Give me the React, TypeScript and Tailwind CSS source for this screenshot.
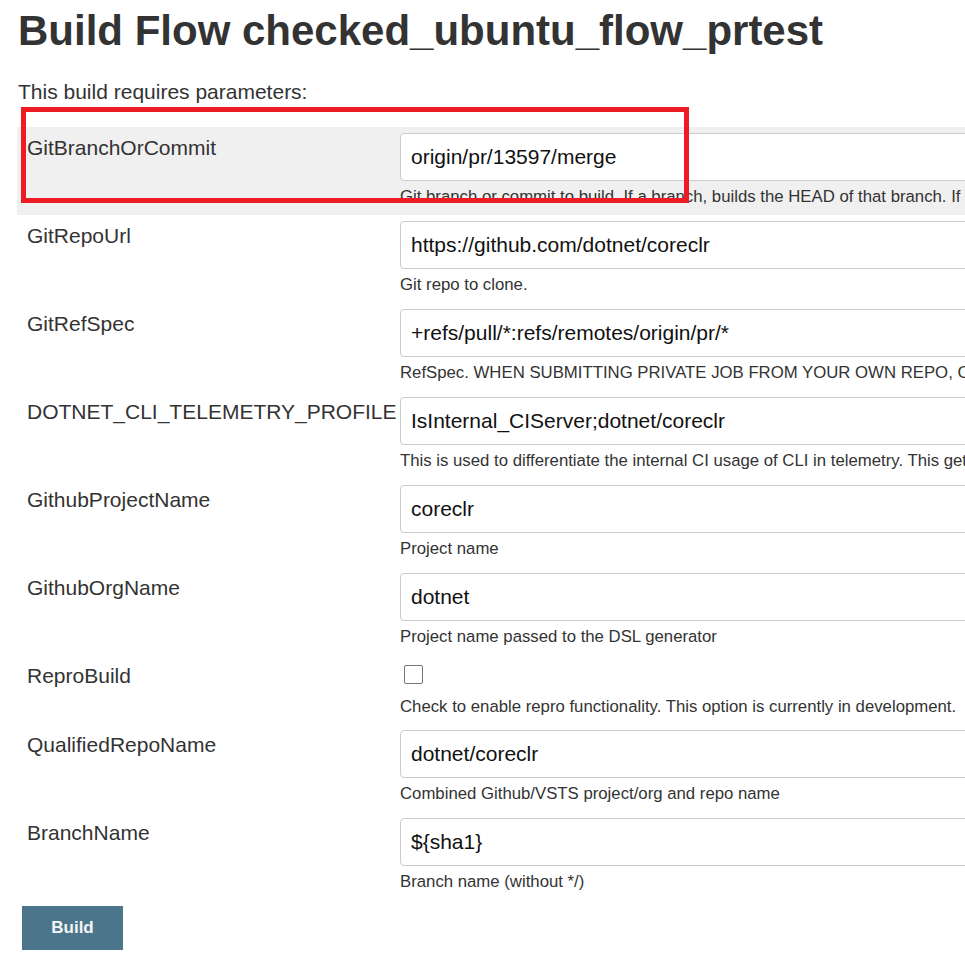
import React from "react";

type Param = {
    name: string;
    value?: string;
    checkbox?: boolean;
    description: string;
};

const params: Param[] = [
    {
        name: "GitBranchOrCommit",
        value: "origin/pr/13597/merge",
        description: "Git branch or commit to build. If a branch, builds the HEAD of that branch. If a commit, then checks out that specific commit."
    },
    {
        name: "GitRepoUrl",
        value: "https://github.com/dotnet/coreclr",
        description: "Git repo to clone."
    },
    {
        name: "GitRefSpec",
        value: "+refs/pull/*:refs/remotes/origin/pr/*",
        description: "RefSpec. WHEN SUBMITTING PRIVATE JOB FROM YOUR OWN REPO, CLEAR THIS FIELD (or just use +refs/heads/*:refs/remotes/origin/*)"
    },
    {
        name: "DOTNET_CLI_TELEMETRY_PROFILE",
        value: "IsInternal_CIServer;dotnet/coreclr",
        description: "This is used to differentiate the internal CI usage of CLI in telemetry. This gets exposed in the environment and picked up by the CLI product."
    },
    {
        name: "GithubProjectName",
        value: "coreclr",
        description: "Project name"
    },
    {
        name: "GithubOrgName",
        value: "dotnet",
        description: "Project name passed to the DSL generator"
    },
    {
        name: "ReproBuild",
        checkbox: true,
        description: "Check to enable repro functionality. This option is currently in development."
    },
    {
        name: "QualifiedRepoName",
        value: "dotnet/coreclr",
        description: "Combined Github/VSTS project/org and repo name"
    },
    {
        name: "BranchName",
        value: "${sha1}",
        description: "Branch name (without */)"
    }
];

function ParamRow({ param, highlighted }: { param: Param; highlighted: boolean }) {
    return (
        <div className={highlighted ? "flex bg-[#f0f0f0]" : "flex"}>
            <div className="w-[383px] shrink-0 pl-[10px] pt-[9px] text-[21px] leading-[24px] text-[#333] whitespace-nowrap">
                {param.name}
            </div>
            <div className={param.checkbox ? "flex-1 pt-[10px] pb-[7px]" : "flex-1 pt-[6px] pb-[8px]"}>
                {param.checkbox ? (
                    <div className="ml-[4px] w-[19px] h-[19px] border border-[#767676] rounded-[2px] bg-white" />
                ) : (
                    <div className="w-[680px] h-[48px] border border-[#cccccc] rounded-[4px] bg-white flex items-center pl-[10px] text-[21px] text-[#111] whitespace-nowrap">
                        {param.value}
                    </div>
                )}
                <div className={param.checkbox ? "mt-[13px] h-[20px] text-[16.75px] leading-[20px] text-[#333] whitespace-nowrap" : "mt-[6px] h-[20px] text-[16.75px] leading-[20px] text-[#333] whitespace-nowrap"}>
                    {param.description}
                </div>
            </div>
        </div>
    );
}

export default function App() {
    return (
        <div
            className="relative w-full h-[971px] overflow-hidden bg-white"
            style={{ fontFamily: '"Liberation Sans", Arial, sans-serif' }}
        >
            <div className="w-[1200px] pl-[17px]">
                <h1 className="pt-[8px] text-[42px] leading-[46px] font-bold text-[#333] pl-[1px]">
                    Build Flow checked_ubuntu_flow_prtest
                </h1>
                <p className="mt-[26px] pl-[1px] text-[21px] leading-[24px] text-[#333]">
                    This build requires parameters:
                </p>
                <div className="mt-[23px]">
                    {params.map((p, i) => (
                        <ParamRow key={p.name} param={p} highlighted={i === 0} />
                    ))}
                </div>
                <button className="mt-[6px] ml-[5px] w-[101px] h-[44px] bg-[#4b758b] text-[#f4f4f4] text-[17px] font-bold">
                    Build
                </button>
            </div>

            {/* red annotation box */}
            <div className="absolute left-[21px] top-[107px] w-[668px] h-[96px] border-[5px] border-[#ed1c24] pointer-events-none" />
        </div>
    );
}
